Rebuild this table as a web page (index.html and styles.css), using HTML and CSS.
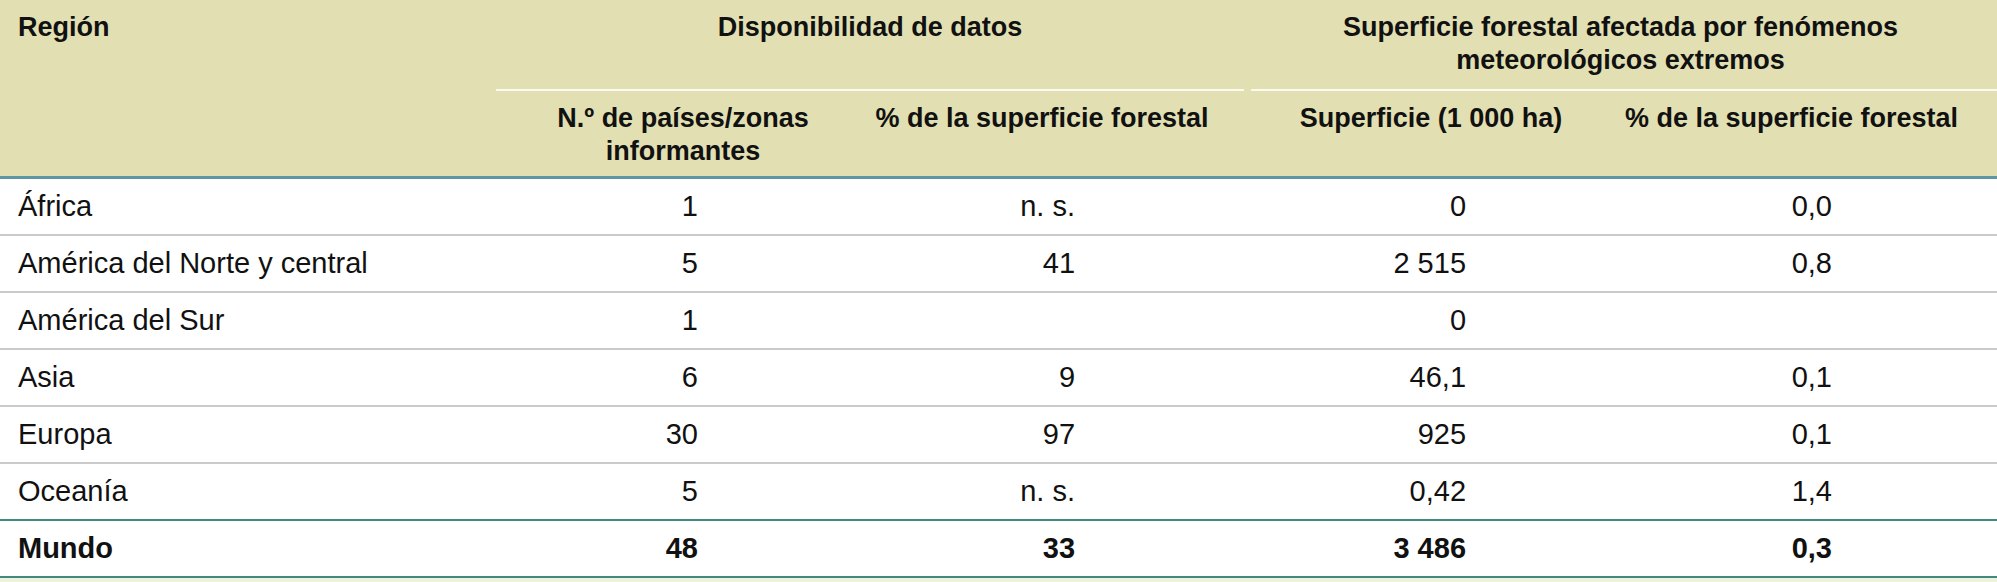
FILE: index.html
```html
<!DOCTYPE html>
<html lang="es">
<head>
<meta charset="utf-8">
<title>Superficie forestal afectada por fenómenos meteorológicos extremos</title>
<link rel="stylesheet" href="styles.css">
</head>
<body>
<table class="data">
  <colgroup>
    <col class="col-region">
    <col class="col-num">
    <col class="col-num">
    <col class="col-num">
    <col>
  </colgroup>
  <thead>
    <tr class="h1">
      <th rowspan="2" class="region">Región</th>
      <th colspan="2" class="group g1">Disponibilidad de datos</th>
      <th colspan="2" class="group g2">Superficie forestal afectada por fenómenos<br>meteorológicos extremos</th>
    </tr>
    <tr class="h2">
      <th class="c1">N.º de países/zonas<br>informantes</th>
      <th class="c2">% de la superficie forestal</th>
      <th class="c3">Superficie (1 000 ha)</th>
      <th class="c4">% de la superficie forestal</th>
    </tr>
  </thead>
  <tbody>
    <tr><td class="region">África</td><td class="c1">1</td><td class="c2">n. s.</td><td class="c3">0</td><td class="c4">0,0</td></tr>
    <tr><td class="region">América del Norte y central</td><td class="c1">5</td><td class="c2">41</td><td class="c3">2 515</td><td class="c4">0,8</td></tr>
    <tr><td class="region">América del Sur</td><td class="c1">1</td><td class="c2"></td><td class="c3">0</td><td class="c4"></td></tr>
    <tr><td class="region">Asia</td><td class="c1">6</td><td class="c2">9</td><td class="c3">46,1</td><td class="c4">0,1</td></tr>
    <tr><td class="region">Europa</td><td class="c1">30</td><td class="c2">97</td><td class="c3">925</td><td class="c4">0,1</td></tr>
    <tr class="last"><td class="region">Oceanía</td><td class="c1">5</td><td class="c2">n. s.</td><td class="c3">0,42</td><td class="c4">1,4</td></tr>
    <tr class="total"><td class="region">Mundo</td><td class="c1">48</td><td class="c2">33</td><td class="c3">3 486</td><td class="c4">0,3</td></tr>
  </tbody>
</table>
</body>
</html>
```

FILE: styles.css
```css
html, body {
  margin: 0;
  padding: 0;
}

body {
  background: #eef1de;
  font-family: "Liberation Sans", Arial, sans-serif;
  color: #111;
}

.data {
  width: 100%;
  table-layout: fixed;
  border-collapse: separate;
  border-spacing: 0;
}

.col-region { width: 496px; }
.col-num { width: 374px; }

/* header */
.data thead th {
  background: #e2e0b2;
  font-size: 27px;
  line-height: 33px;
  font-weight: bold;
  vertical-align: top;
  text-align: center;
  white-space: nowrap;
  padding: 11px 0 0;
}

.data tr.h1 { height: 91px; }
.data tr.h2 { height: 88px; }

.data thead th.region {
  text-align: left;
  padding-left: 18px;
  border-bottom: 3px solid #5c97a4;
}

.data thead tr.h2 th {
  border-bottom: 3px solid #5c97a4;
}

.data th.g1 {
  background: linear-gradient(#fbfaf0, #fbfaf0) left bottom / 100% 2px no-repeat, #e2e0b2;
}

.data th.g2 {
  background: linear-gradient(#fbfaf0, #fbfaf0) right bottom / calc(100% - 7px) 2px no-repeat, #e2e0b2;
}

.data thead th.c2 { padding-right: 30px; }
.data thead th.c4 { padding-right: 32px; }

/* body */
.data tbody tr { height: 57px; }

.data tbody td {
  background: #fff;
  font-size: 29px;
  line-height: 33px;
  padding: 0;
  vertical-align: middle;
  text-align: right;
  white-space: nowrap;
  border-bottom: 2px solid #cacaca;
}

.data tbody td.region {
  text-align: left;
  padding-left: 18px;
}

.data tbody td.c1 { padding-right: 172px; }
.data tbody td.c2 { padding-right: 169px; }
.data tbody td.c3 { padding-right: 152px; }
.data tbody td.c4 { padding-right: 165px; }

.data tbody tr.last td {
  border-bottom: 2px solid #3f8b7c;
}

.data tbody tr.total td {
  font-weight: bold;
  border-bottom: 2px solid #3f8b7c;
}
```
